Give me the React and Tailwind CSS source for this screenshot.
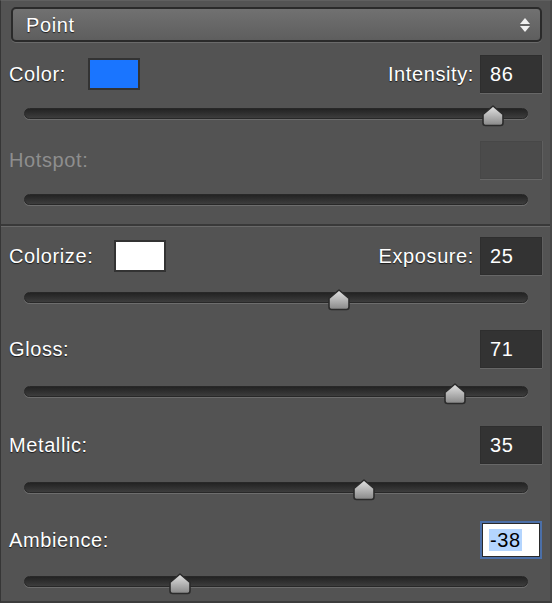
import React from "react";

const rows = [
  { label: "Color:", swatch: "#1a75ff", right: "Intensity:", value: 86 },
  { label: "Hotspot:", disabled: true },
];

function Thumb({ value }) {
  const frac = (value + 100) / 200;
  return (
    <svg
      width="24"
      height="22"
      viewBox="0 0 24 22"
      className="absolute top-[-3px]"
      style={{ left: `calc(${frac * 100}% - 12px)` }}
    >
      <defs>
        <linearGradient id="thumbfill" x1="0" y1="0" x2="0" y2="1">
          <stop offset="0" stopColor="#e4e4e4" />
          <stop offset="1" stopColor="#878787" />
        </linearGradient>
      </defs>
      <path
        d="M12 1 L22 9.5 V18 Q22 20.5 19.5 20.5 H4.5 Q2 20.5 2 18 V9.5 Z"
        fill="url(#thumbfill)"
        stroke="#2b2b2b"
        strokeWidth="1.6"
        strokeLinejoin="round"
      />
    </svg>
  );
}

function Track({ value, className = "" }) {
  return (
    <div className={`relative ml-[23px] w-[504px] h-[11px] ${className}`}>
      <div className="h-[11px] rounded-full bg-gradient-to-b from-[#232323] to-[#3d3d3d] border border-[#282828] shadow-[0_1px_0_#6d6d6d]" />
      {value !== undefined && <Thumb value={value} />}
    </div>
  );
}

function ValueBox({ value, disabled, focused }) {
  if (focused) {
    return (
      <div className="w-[62px] h-[38px] border-2 border-[#4b6fa8] p-[1px] bg-[#2a2a2a]">
        <div className="w-full h-full bg-white flex items-center pl-[6px]">
          <span className="bg-[#b4d5fe] text-black px-[1px] leading-[22px]">{value}</span>
        </div>
      </div>
    );
  }
  return (
    <div
      className={`w-[62px] h-[38px] border border-[#2e2e2e] shadow-[0_1px_0_#676767,1px_0_0_#5f5f5f] flex items-center pl-[9px] ${
        disabled ? "bg-[#4b4b4b] border-[#474747]" : "bg-[#333333] text-white"
      }`}
    >
      {value}
    </div>
  );
}

const shadow = "[text-shadow:0_1px_1px_rgba(0,0,0,0.7)]";

function Row({ label, swatch, right, value, disabled, focused, className = "" }) {
  return (
    <div className={`flex items-center h-[38px] pl-[8px] pr-[8px] ${className}`}>
      <span className={disabled ? "text-[#8e8e8e]" : `text-white ${shadow}`}>{label}</span>
      {swatch && (
        <div
          className={`h-[32px] w-[52px] border-2 border-[#333] ${swatch === "#ffffff" ? "ml-[21px]" : "ml-[22px]"}`}
          style={{ backgroundColor: swatch }}
        />
      )}
      <div className="flex-1" />
      {right && <span className={`mr-[6px] text-white ${shadow}`}>{right}</span>}
      <ValueBox value={value} disabled={disabled} focused={focused} />
    </div>
  );
}

export default function App() {
  return (
    <div
      className="w-[552px] h-[603px] bg-[#535353] border-l border-l-[#363636] border-r-2 border-r-[#474747] border-b-2 border-b-[#3c3c3c] border-t border-t-[#5f5f5f] overflow-hidden text-[20px] tracking-[0.6px]"
      style={{ fontFamily: '"Liberation Sans", Arial, sans-serif' }}
    >
      <div className="ml-[10px] mr-[8px] mt-[6px] h-[35px] rounded-[5px] border-2 border-[#2a2a2a] bg-gradient-to-b from-[#717171] to-[#5e5e5e] shadow-[0_1px_0_#6a6a6a] flex items-center pl-[13px] pr-[9px]">
        <span className={`text-white ${shadow}`}>Point</span>
        <svg width="12" height="16" viewBox="0 0 12 16" className="ml-auto">
          <path d="M6 1 L11 7 H1 Z" fill="#f2f2f2" />
          <path d="M6 15 L11 9 H1 Z" fill="#f2f2f2" />
        </svg>
      </div>

      <Row {...rows[0]} className="mt-[13px]" />
      <Track value={86} className="mt-[15px]" />

      <Row {...rows[1]} className="mt-[22px]" />
      <Track className="mt-[15px]" />

      <div className="mt-[19px] border-t-2 border-t-[#393939] border-b border-b-[#696969]" />

      <Row label="Colorize:" swatch="#ffffff" right="Exposure:" value={25} className="mt-[10px]" />
      <Track value={25} className="mt-[17px]" />

      <Row label="Gloss:" value={71} className="mt-[27px]" />
      <Track value={71} className="mt-[18px]" />

      <Row label="Metallic:" value={35} className="mt-[29px]" />
      <Track value={35} className="mt-[18px]" />

      <Row label="Ambience:" value={-38} focused className="mt-[28px]" />
      <Track value={-38} className="mt-[17px]" />
    </div>
  );
}
